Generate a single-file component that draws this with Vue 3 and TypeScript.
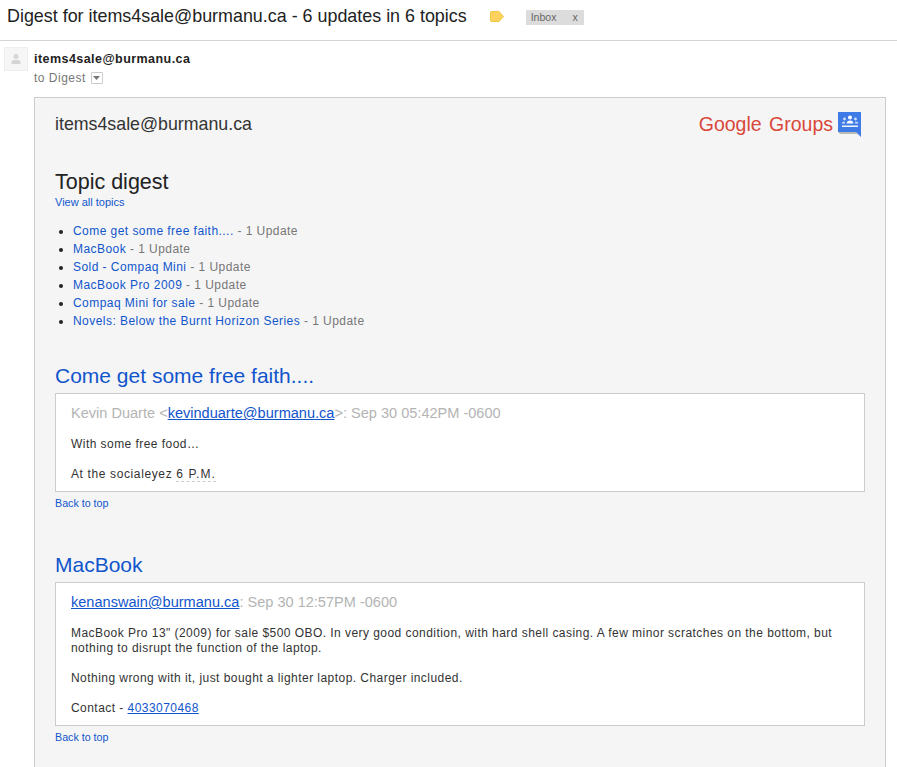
<template>
  <div class="page">
    <header class="subject-bar">
      <h1 class="subject">Digest for items4sale@burmanu.ca - 6 updates in 6 topics</h1>
      <svg class="tag" width="14" height="11" viewBox="0 0 14 11"><path d="M0.5 1.5 Q0.5 0.5 1.5 0.5 H9 L13.5 5.5 L9 10.5 H1.5 Q0.5 10.5 0.5 9.5 Z" fill="#fbd25e" stroke="#f2c544" /></svg>
      <span class="label">Inbox<span class="label-x">x</span></span>
    </header>

    <div class="message">
      <div class="avatar">
        <svg width="12" height="12" viewBox="0 0 12 12"><circle cx="6" cy="3.5" r="2.5" fill="#d4d4d4" /><path d="M1.5 11 V9 Q1.5 7 4 7 H8 Q10.5 7 10.5 9 V11 Z" fill="#d4d4d4" /></svg>
      </div>
      <div class="message-main">
        <div class="sender">items4sale@burmanu.ca</div>
        <div class="recipients">
          to Digest
          <span class="caret-box"><svg width="7" height="4" viewBox="0 0 7 4"><path d="M0 0 H7 L3.5 4 Z" fill="#777" /></svg></span>
        </div>

        <div class="digest">
          <div class="digest-head">
            <div class="group-name">items4sale@burmanu.ca</div>
            <div class="brand">
              <span class="brand-name">Google Groups</span>
              <svg width="26" height="28" viewBox="0 0 26 28">
                <path d="M1 1 H24 V26 L19 21 H1 Z" fill="#3f7be6" />
                <path d="M1 21 H19 L21 23 H3 Z" fill="#8a8a80" opacity="0.55" />
                <circle cx="13" cy="6.5" r="2" fill="#fff" />
                <circle cx="7.5" cy="8" r="1.4" fill="#cfe0fb" />
                <circle cx="18.5" cy="8" r="1.4" fill="#cfe0fb" />
                <path d="M9.5 12.5 Q10 9.5 13 9.5 Q16 9.5 16.5 12.5 Z" fill="#fff" />
                <path d="M4.5 12.5 Q5 10.5 7.5 10.5 L8.2 12.5 Z M17.8 12.5 L18.5 10.5 Q21 10.5 21.5 12.5 Z" fill="#cfe0fb" />
                <rect x="5" y="14.5" width="16" height="1.4" fill="#fff" />
              </svg>
            </div>
          </div>

          <h2 class="digest-title">Topic digest</h2>
          <a class="small-link">View all topics</a>

          <ul class="topics">
            <li v-for="t in topics" :key="t"><a class="topic-link">{{ t }}</a><span class="update"> - 1 Update</span></li>
          </ul>

          <section class="post first">
            <h3 class="post-title">Come get some free faith....</h3>
            <div class="post-card">
              <div class="byline">Kevin Duarte &lt;<a class="mail">kevinduarte@burmanu.ca</a>&gt;: Sep 30 05:42PM -0600</div>
              <p>With some free food…</p>
              <p class="loose">At the socialeyez <span class="dotted">6 P.M.</span></p>
            </div>
            <a class="small-link back">Back to top</a>
          </section>

          <section class="post second">
            <h3 class="post-title">MacBook</h3>
            <div class="post-card">
              <div class="byline"><a class="mail">kenanswain@burmanu.ca</a>: Sep 30 12:57PM -0600</div>
              <p>MacBook Pro 13" (2009) for sale $500 OBO. In very good condition, with hard shell casing. A few minor scratches on the bottom, but nothing to disrupt the function of the laptop.</p>
              <p>Nothing wrong with it, just bought a lighter laptop. Charger included.</p>
              <p>Contact - <a class="mail">4033070468</a></p>
            </div>
            <a class="small-link back">Back to top</a>
          </section>
        </div>
      </div>
    </div>
  </div>
</template>

<script setup lang="ts">
const topics: string[] = [
  'Come get some free faith....',
  'MacBook',
  'Sold - Compaq Mini',
  'MacBook Pro 2009',
  'Compaq Mini for sale',
  'Novels: Below the Burnt Horizon Series',
]
</script>

<style>
html, body {
  margin: 0;
  height: 100%;
  overflow: hidden;
  background: #fff;
}
</style>

<style scoped>
.page {
  width: 897px;
  height: 767px;
  overflow: hidden;
  font-family: "Liberation Sans", Arial, sans-serif;
  color: #222;
}

.subject-bar {
  display: flex;
  align-items: center;
  height: 41px;
  padding: 0 0 7px 7px;
  box-sizing: border-box;
  border-bottom: 1px solid #d5d5d5;
}

.subject {
  margin: 0;
  font-size: 17.9px;
  font-weight: 400;
  color: #222;
  white-space: nowrap;
}

.tag {
  margin-left: 23px;
}

.label {
  display: flex;
  justify-content: space-between;
  margin: 2px 0 0 22px;
  width: 58px;
  height: 15px;
  line-height: 15px;
  padding: 0 6px 0 5px;
  box-sizing: border-box;
  background: #dcdcdc;
  color: #666;
  font-size: 10.5px;
}

.message {
  display: flex;
  padding: 6px 11px 0 4px;
}

.avatar {
  display: flex;
  align-items: center;
  justify-content: center;
  width: 24px;
  height: 24px;
  box-sizing: border-box;
  background: #f6f6f6;
  border: 1px solid #eee;
  flex: none;
}

.message-main {
  flex: 1;
  margin-left: 6px;
  min-width: 0;
}

.sender {
  font-size: 12.5px;
  font-weight: 700;
  letter-spacing: 0.45px;
  line-height: 16px;
  margin-top: 4px;
}

.recipients {
  display: flex;
  align-items: center;
  gap: 5px;
  margin-top: 3px;
  font-size: 12px;
  letter-spacing: 0.5px;
  color: #777;
  line-height: 16px;
}

.caret-box {
  display: flex;
  align-items: center;
  justify-content: center;
  width: 10px;
  height: 10px;
  border: 1px solid #ccc;
  border-radius: 1px;
}

.digest {
  margin-top: 11px;
  padding: 0 20px 40px 20px;
  background: #f5f5f5;
  border: 1px solid #ccc;
  height: 700px;
}

.digest-head {
  display: flex;
  justify-content: space-between;
  align-items: center;
  padding-top: 13px;
}

.group-name {
  padding-bottom: 2px;
  font-size: 17.8px;
  color: #333;
}

.brand {
  display: flex;
  align-items: center;
  gap: 4px;
  margin-right: 2px;
}

.brand-name {
  padding-bottom: 2px;
  font-size: 19.5px;
  color: #d9483b;
  word-spacing: 2px;
}

.digest-title {
  margin: 30px 0 0;
  font-size: 21.5px;
  line-height: 26px;
  font-weight: 400;
  color: #222;
}

.small-link {
  display: block;
  font-size: 11px;
  line-height: 14px;
  color: #1155cc;
}

.topics {
  margin: 13px 0 0;
  padding: 0 0 0 18px;
  list-style: disc;
}

.topics li {
  font-size: 12px;
  line-height: 18px;
  letter-spacing: 0.45px;
  color: #222;
}

.topic-link {
  color: #1155cc;
}

.update {
  color: #777;
}

.post.first {
  margin-top: 33px;
}

.post.second {
  margin-top: 42px;
}

.post-title {
  margin: 0;
  font-size: 21px;
  line-height: 26px;
  font-weight: 400;
  color: #1155cc;
}

.post-card {
  margin-top: 4px;
  padding: 10px 15px 9px;
  background: #fff;
  border: 1px solid #ccc;
}

.byline {
  font-size: 14.55px;
  line-height: 18px;
  color: #b4b4b4;
}

.mail {
  color: #1155cc;
  text-decoration: underline;
}

.post-card p {
  margin: 15px 0 0;
  font-size: 12px;
  line-height: 15px;
  letter-spacing: 0.45px;
  color: #333;
}

.post-card p.loose {
  letter-spacing: 0.62px;
}

.dotted {
  letter-spacing: 1.1px;
  border-bottom: 1px dashed #ccc;
}

.back {
  margin-top: 4px;
  font-size: 10.7px;
}
</style>
